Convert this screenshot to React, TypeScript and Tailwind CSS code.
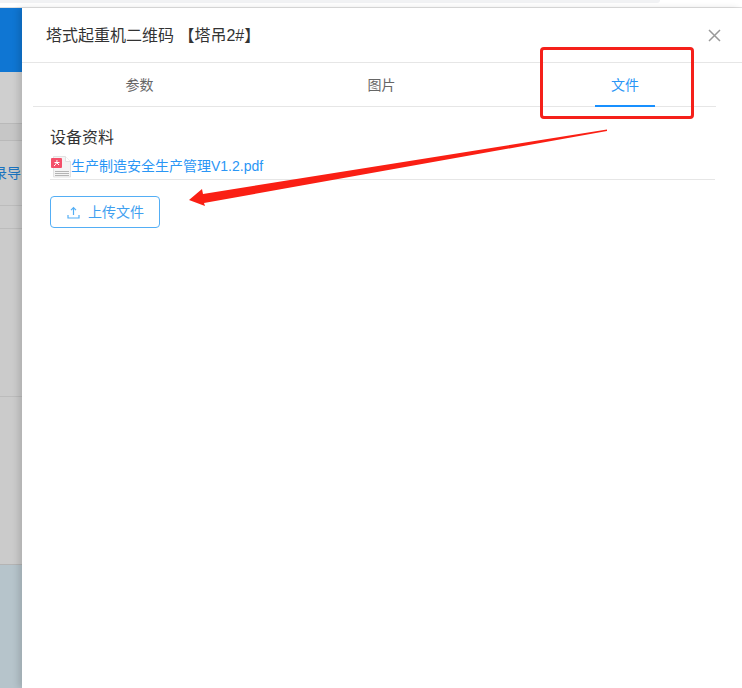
import React from "react";

const font = { fontFamily: '"Liberation Sans", "Noto Sans CJK SC", sans-serif' };

function PdfIcon() {
  return (
    <svg width="20" height="24" viewBox="0 0 20 24" className="shrink-0">
      <path d="M2.500 1.500h12l5 5v15.500h-17z" fill="#f4f4f4" stroke="#e2e2e2" strokeWidth="1" />
      <path d="M14.500 1.500v5h5" fill="#ffffff" stroke="#e2e2e2" strokeWidth="1" />
      <rect x="0" y="3" width="11" height="10" rx="1" fill="#f4506a" />
      <path d="M3 11c2-1.500 3-3.500 3-6M3.500 7.500h5M6 8l2 2" stroke="#fff" strokeWidth="1" fill="none" />
      <path d="M4 16.500h14M4 18.500h14M4 20.500h14" stroke="#b4b4b4" strokeWidth="1" />
    </svg>
  );
}

export default function App() {
  return (
    <div className="relative w-[742px] h-[688px] overflow-hidden bg-white flex flex-col" style={font}>
      <div className="h-[3px] w-[660px] bg-[#f1f2f4] rounded-br-md shrink-0" />
      <div className="h-[4px] shrink-0" />
      <div className="h-[1px] bg-[#e0e0e0] shrink-0" />
      <div className="flex flex-1 min-h-0">
        <div className="w-[22px] shrink-0 flex flex-col bg-[#cbcbcb] overflow-hidden">
          <div className="h-[64px] bg-[#0f76d3] shrink-0" />
          <div className="h-[52px] bg-[#cfcfcf] shrink-0 border-b border-[#b9b9b9]" />
          <div className="h-[17px] bg-[#c6c6c6] shrink-0 border-b border-[#b9b9b9]" />
          <div className="h-[65px] shrink-0 border-b border-[#bcbcbc] flex items-center justify-end pr-[1px]">
            <span className="text-[14px] text-[#1b74c0] whitespace-nowrap leading-[18px]">录导</span>
          </div>
          <div className="h-[23px] shrink-0 border-b border-[#bcbcbc]" />
          <div className="h-[168px] shrink-0 border-b border-[#bcbcbc]" />
          <div className="h-[168px] shrink-0 border-b border-[#b4b4b4]" />
          <div className="flex-1 bg-[#b6c4cb]" />
        </div>
        <div className="flex-1 min-w-0 bg-white flex flex-col shadow-[-4px_0_6px_rgba(0,0,0,0.12)] relative">
          <div className="h-[55px] shrink-0 border-b border-[#e6e6e6] flex items-center justify-between pl-[24px] pr-[21px]">
            <span className="text-[16px] text-[#333333] whitespace-nowrap pt-[2px]">塔式起重机二维码 【塔吊2#】</span>
            <svg width="13" height="13" viewBox="0 0 13 13" className="mt-[1px]">
              <path d="M1 1l11 11M12 1L1 12" stroke="#999999" strokeWidth="1.500" fill="none" />
            </svg>
          </div>
          <div className="h-[44px] shrink-0 ml-[11px] mr-[26px] border-b border-[#e6e6e6] grid grid-cols-[213px_271px_1fr] text-[14px]">
            <div className="flex items-center justify-center text-[#666666] pt-[2px]">参数</div>
            <div className="flex items-center justify-center text-[#666666] pt-[2px]">图片</div>
            <div className="relative flex items-center justify-center text-[#2a96f5] pt-[2px]">
              <span className="ml-[17px]">文件</span>
              <div className="absolute bottom-[-1px] left-[78px] w-[60px] h-[2px] bg-[#1890ff]" />
            </div>
          </div>
          <div className="pl-[28px] pr-[27px] flex flex-col">
            <div className="text-[16px] leading-[20px] text-[#333333] mt-[21px]">设备资料</div>
            <div className="flex items-center h-[26px] border-b border-[#e6e6e6] mt-[6px] pl-[1px]">
              <PdfIcon />
              <span className="text-[14px] text-[#2a96f5] whitespace-nowrap">生产制造安全生产管理V1.2.pdf</span>
            </div>
            <button className="mt-[16px] w-[110px] h-[32px] rounded-[4px] border border-[#53aef5] flex items-center justify-center gap-[8px] text-[14px] text-[#40a0f0] bg-white">
              <svg width="13" height="13" viewBox="0 0 13 13" className="ml-[1px]">
                <path d="M6.500 9V2M4 4.200 6.500 1.700 9 4.200M1 9v3h11V9" stroke="#53aef5" strokeWidth="1.200" fill="none" />
              </svg>
              <span>上传文件</span>
            </button>
          </div>
        </div>
      </div>
      <div className="absolute left-[540px] top-[47px] w-[154px] h-[72px] rounded-[4px] border-[3px] border-[#f5201a]" />
      <svg className="absolute left-0 top-0 pointer-events-none" width="742" height="688" viewBox="0 0 742 688">
        <path d="M607 129.500 203 194 202 189 189 200 205 206 204 203 607 131Z" fill="#fa1f14" />
      </svg>
    </div>
  );
}
